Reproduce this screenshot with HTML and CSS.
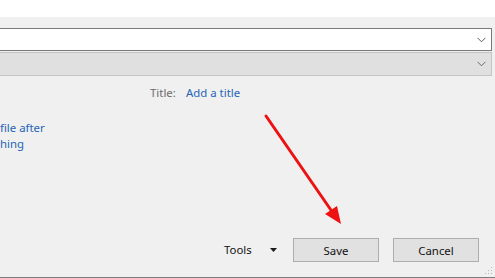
FILE: index.html
```html
<!DOCTYPE html>
<html>
<head>
<meta charset="utf-8">
<link rel="stylesheet" href="styles.css">
</head>
<body>
<div class="window">
  <div class="topbar"></div>
  <div class="content">
    <div class="combo combo-edit">
      <svg class="chev" width="9" height="6" viewBox="0 0 9 6"><path d="M0.5 0.8 L4.5 4.8 L8.5 0.8" fill="none" stroke="#5a5a5a" stroke-width="1"/></svg>
    </div>
    <div class="combo combo-disabled">
      <svg class="chev" width="9" height="6" viewBox="0 0 9 6"><path d="M0.5 0.8 L4.5 4.8 L8.5 0.8" fill="none" stroke="#6a6a6a" stroke-width="1"/></svg>
    </div>
    <div class="title-row">
      <span class="label">Title:</span>
      <span class="link">Add a title</span>
    </div>
    <div class="note">
      <span class="link">file after</span>
      <span class="link">hing</span>
    </div>
  </div>
  <div class="footer">
    <span class="tools">Tools</span>
    <svg class="caret" width="7" height="4" viewBox="0 0 7 4"><path d="M0 0 H7 L3.5 4 Z" fill="#1a1a1a"/></svg>
    <button class="btn save">Save</button>
    <button class="btn cancel">Cancel</button>
    <svg class="grip" width="8" height="8" viewBox="0 0 8 8">
      <rect x="6" y="0" width="1" height="1" fill="#b8b8b8"/>
      <rect x="3" y="3" width="1" height="1" fill="#b8b8b8"/>
      <rect x="6" y="3" width="1" height="1" fill="#b8b8b8"/>
      <rect x="0" y="6" width="1" height="1" fill="#b8b8b8"/>
      <rect x="3" y="6" width="1" height="1" fill="#b8b8b8"/>
      <rect x="6" y="6" width="1" height="1" fill="#b8b8b8"/>
    </svg>
  </div>
  <svg class="arrow" width="495" height="278" viewBox="0 0 495 278">
    <line x1="266" y1="116" x2="333" y2="213" stroke="#ee1111" stroke-width="3" stroke-linecap="round"/>
    <path d="M341 224 L325 214 L337 206 Z" fill="#ee1111"/>
  </svg>
</div>
</body>
</html>
```
FILE: styles.css
```css
html, body {
  margin: 0;
  padding: 0;
}
body {
  width: 495px;
  height: 278px;
  overflow: hidden;
  background: #f0f0f0;
  font-family: "Noto Sans", "Open Sans", sans-serif;
  font-size: 11.4px;
}
.window {
  position: relative;
  width: 495px;
  height: 278px;
  box-sizing: border-box;
  border-bottom: 1px solid #7c7c7c;
  display: flex;
  flex-direction: column;
  background: #f0f0f0;
}
.topbar {
  height: 17px;
  background: #ffffff;
}
.content {
  flex: 1;
  display: flex;
  flex-direction: column;
  padding-top: 11px;
}
.combo {
  width: 492px;
  box-sizing: border-box;
  display: flex;
  align-items: center;
  justify-content: flex-end;
  padding-right: 5px;
}
.combo-edit {
  height: 23px;
  background: #ffffff;
  border: 1px solid #7a7a7a;
  border-left: 0;
}
.combo-disabled {
  margin-top: 1px;
  height: 24px;
  background: #e0e0e0;
  border: 1px solid #c4c4c4;
  border-left: 0;
}
.chev {
  display: block;
}
.title-row {
  margin-top: 9px;
  padding-left: 150px;
  display: flex;
  line-height: 16px;
}
.label {
  color: #6b6b6b;
  width: 36px;
}
.link {
  color: #1f64b6;
}
.note {
  margin-top: 19px;
  display: flex;
  flex-direction: column;
  line-height: 16px;
}
.footer {
  height: 40px;
  display: flex;
  align-items: flex-start;
  padding-top: 1px;
  box-sizing: border-box;
}
.tools {
  margin-left: 224px;
  width: 46px;
  height: 24px;
  line-height: 24px;
  color: #111;
}
.caret {
  margin-top: 10px;
}
.btn {
  font-family: inherit;
  font-size: 11.4px;
  color: #111;
  width: 86px;
  height: 24px;
  padding: 0;
  background: #e1e1e1;
  border: 1px solid #adadad;
  border-radius: 0;
}
.save {
  margin-left: 16px;
}
.cancel {
  margin-left: 14px;
}
.grip {
  margin-left: 6px;
  margin-top: 29px;
}
.arrow {
  position: absolute;
  left: 0;
  top: 0;
  pointer-events: none;
}
```
